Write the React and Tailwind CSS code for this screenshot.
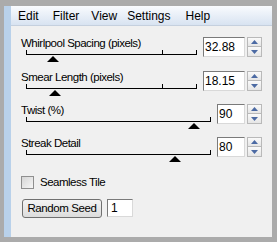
import React from "react";

const font = { fontFamily: '"Liberation Sans", Arial, sans-serif' };

const Thumb = ({ left }) => (
  <svg
    className="absolute top-[6px]"
    style={{ left: left - 6 }}
    width="12"
    height="6"
    viewBox="0 0 12 6"
  >
    <path d="M6 0 L12 6 L0 6 Z" fill="#000" />
  </svg>
);

const Spinner = () => (
  <div className="ml-[2px] flex w-[15px] flex-col">
    <div className="flex h-[10px] items-center justify-center border border-[#b9b9b9] bg-gradient-to-b from-[#fafafa] to-[#e6e6e6]">
      <svg width="7" height="4" viewBox="0 0 7 4">
        <path d="M3.5 0 L7 4 L0 4 Z" fill="#4c6aa3" />
      </svg>
    </div>
    <div className="flex h-[10px] items-center justify-center border border-t-0 border-[#b9b9b9] bg-gradient-to-b from-[#fafafa] to-[#e6e6e6]">
      <svg width="7" height="4" viewBox="0 0 7 4">
        <path d="M0 0 L7 0 L3.5 4 Z" fill="#4c6aa3" />
      </svg>
    </div>
  </div>
);

const rows = [
  { label: "Whirlpool Spacing (pixels)", value: "32.88", wide: true, thumb: 26, ticks: [135], h: "h-[34px]" },
  { label: "Smear Length (pixels)", value: "18.15", wide: true, thumb: 28, ticks: [135], h: "h-[33px]" },
  { label: "Twist (%)", value: "90", wide: false, thumb: 167, ticks: [], h: "h-[33px]" },
  { label: "Streak Detail", value: "80", wide: false, thumb: 148, ticks: [], h: "h-[33px]" },
];

const SliderRow = ({ row }) => (
  <div className={`flex pr-[10px] ${row.h}`}>
    <div className="flex flex-1 flex-col pt-[1px]">
      <div className="ml-[10px] h-[11px] text-[11.5px] leading-[11px] tracking-[-0.5px] text-black">
        {row.label}
      </div>
      <div
        className={`relative ml-[15px] mt-[1px] h-[5px] border-x border-b border-black ${
          row.wide ? "w-[171px]" : "w-[185px]"
        }`}
      >
        {row.ticks.map((t) => (
          <div key={t} className="absolute top-0 h-[4px] w-px bg-black" style={{ left: t }} />
        ))}
        <Thumb left={row.thumb} />
      </div>
    </div>
    <div className="flex items-start">
      <div
        className={`flex h-[20px] items-center border border-t-[#7a7a7a] border-l-[#7a7a7a] border-r-[#d9d9d9] border-b-[#d9d9d9] bg-white pl-[1px] text-[12px] text-black ${
          row.wide ? "w-[42px]" : "w-[28px]"
        }`}
      >
        {row.value}
      </div>
      <Spinner />
    </div>
  </div>
);

export default function App() {
  return (
    <div
      className="flex h-[242px] w-[277px] bg-[#ababab] pb-[5px] pl-[4px] pr-[5px] pt-[6px]"
      style={font}
    >
      <div className="w-[7px] shrink-0 bg-[#b9d1ea]" />
      <div className="flex flex-1 flex-col bg-[#f0f0f0]">
        <div className="flex h-[20px] shrink-0 items-center border-b border-[#c5d0de] bg-gradient-to-b from-[#f9fbfe] to-[#d8e3f1] text-[12px] text-black">
          <span className="ml-[7px]">Edit</span>
          <span className="ml-[14px]">Filter</span>
          <span className="ml-[12px]">View</span>
          <span className="ml-[10px]">Settings</span>
          <span className="ml-[15px]">Help</span>
        </div>
        <div className="flex flex-col pt-[11px]">
          {rows.map((r) => (
            <SliderRow key={r.label} row={r} />
          ))}
        </div>
        <div className="ml-[10px] mt-[6px] flex items-center gap-[6px]">
          <div className="h-[13px] w-[13px] border border-[#8f8f8f] bg-gradient-to-br from-[#d6d6d6] to-[#f6f6f6]" />
          <span className="text-[11.5px] leading-[13px] tracking-[-0.5px] text-black">Seamless Tile</span>
        </div>
        <div className="ml-[11px] mt-[10px] flex items-start gap-[5px]">
          <button className="flex h-[19px] w-[80px] items-center justify-center rounded-[3px] border border-[#707070] bg-gradient-to-b from-[#f4f4f4] to-[#dcdcdc] text-[11.5px] tracking-[-0.4px] text-black">
            Random Seed
          </button>
          <div className="flex h-[18px] w-[26px] items-center border border-t-[#7a7a7a] border-l-[#7a7a7a] border-r-[#d9d9d9] border-b-[#d9d9d9] bg-white pl-[3px] text-[12px] text-black">
            1
          </div>
        </div>
      </div>
    </div>
  );
}
